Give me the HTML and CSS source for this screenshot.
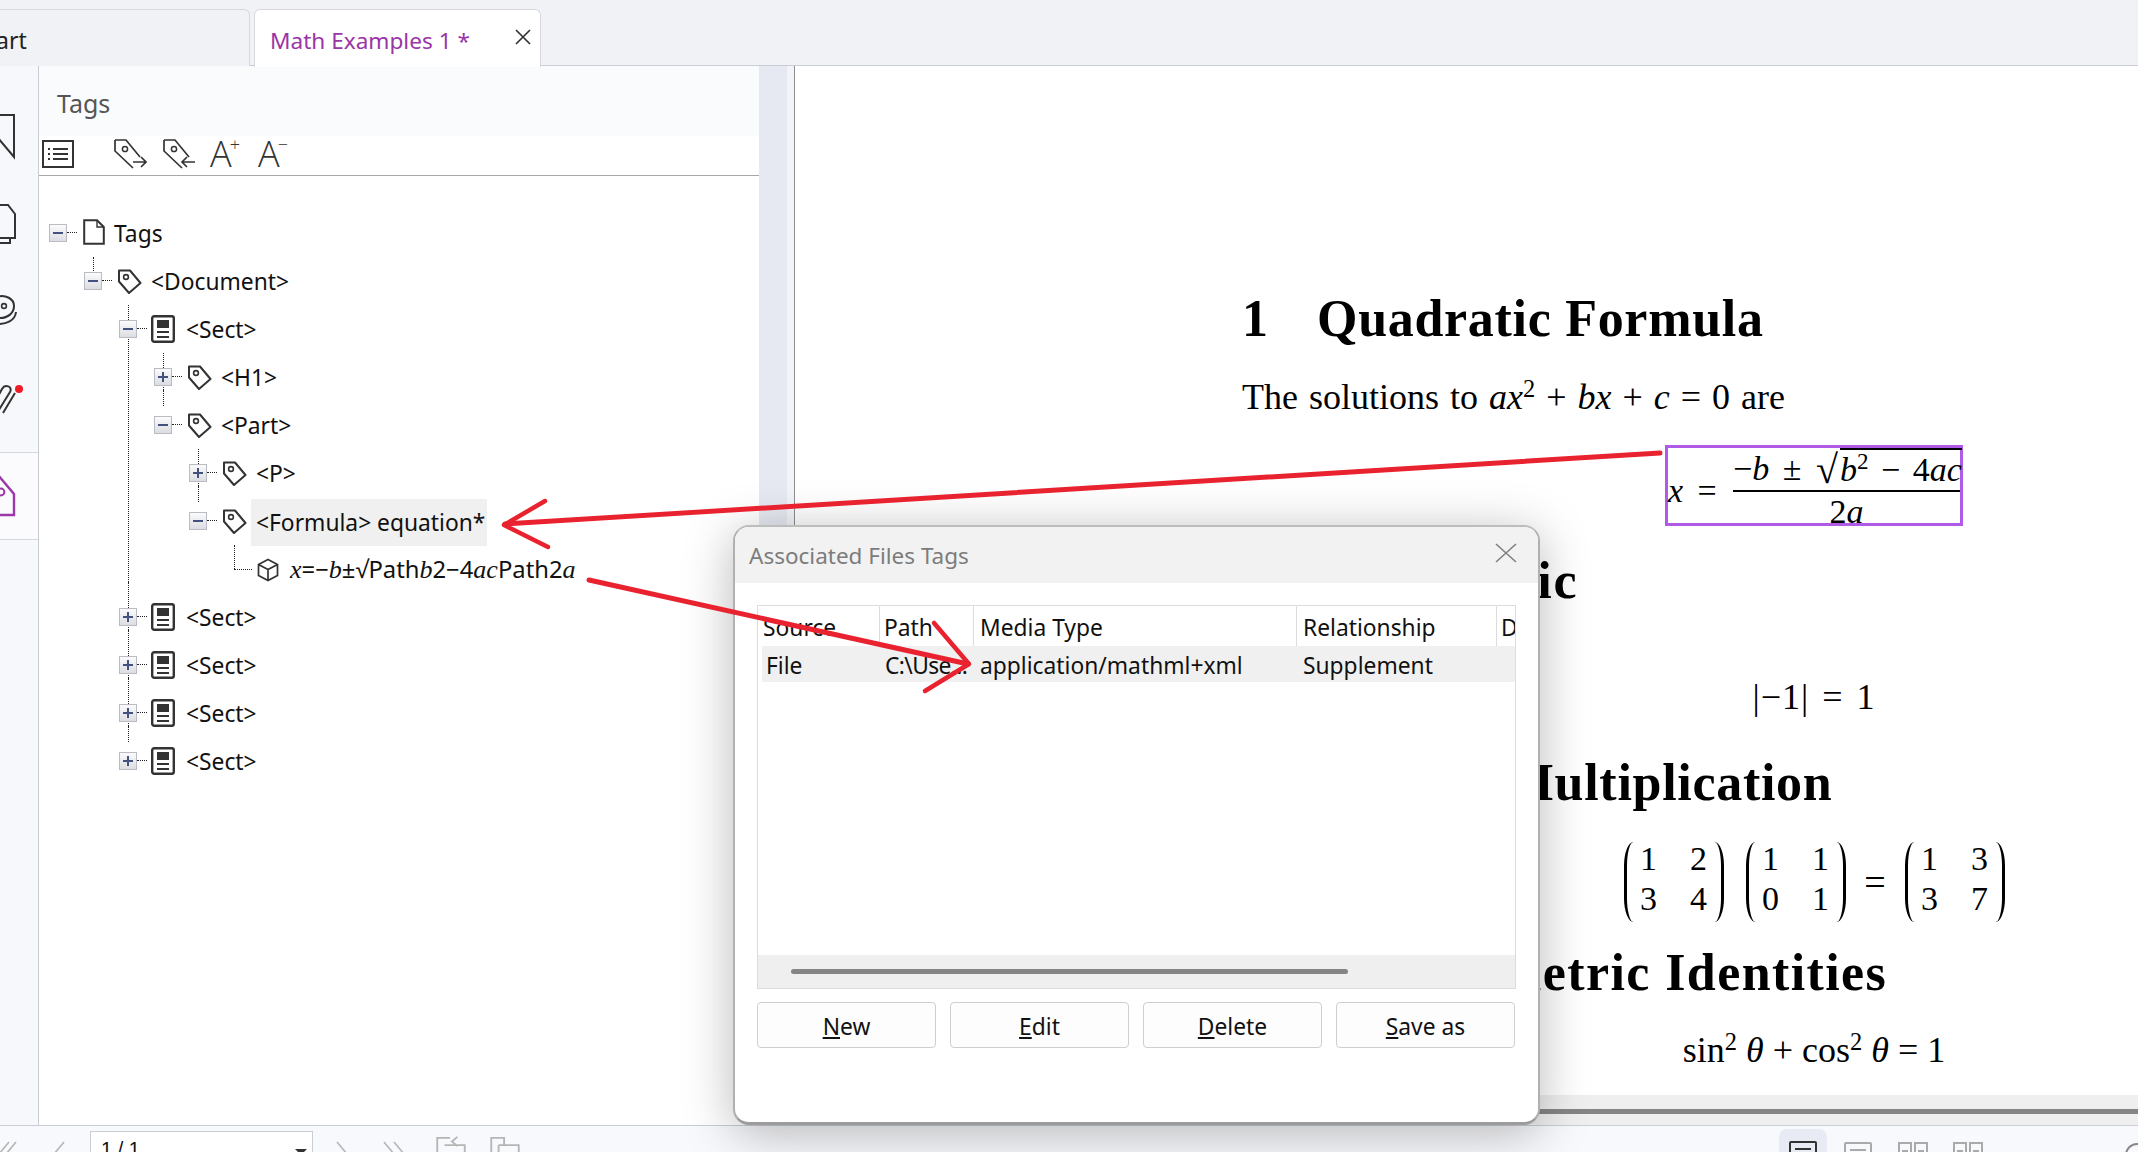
FILE: index.html
```html
<!DOCTYPE html>
<html lang="en">
<head>
<meta charset="utf-8">
<title>Math Examples 1</title>
<link rel="stylesheet" href="styles.css">
</head>
<body>
<svg class="defs" aria-hidden="true">
  <symbol id="tag" viewBox="0 0 25 25"><path d="M2 1.5H13L23.5 14 12 24 2 12.5Z" fill="none" stroke="#333" stroke-width="2" stroke-linejoin="round"/><circle cx="9" cy="8" r="2.4" fill="none" stroke="#333" stroke-width="1.6"/></symbol>
  <symbol id="sect" viewBox="0 0 24 28"><rect x="1.2" y="1.2" width="21.6" height="25.6" rx="2" fill="none" stroke="#333" stroke-width="2.4"/><rect x="6" y="5" width="12" height="8" fill="#333"/><path d="M6 17H18M6 22H18" stroke="#333" stroke-width="2"/></symbol>
  <symbol id="tagout" viewBox="0 0 34 32"><path d="M2 2H13L27 19M20 30 2 13V2" fill="none" stroke="#333" stroke-width="1.7"/><circle cx="12" cy="11" r="2.6" fill="none" stroke="#333" stroke-width="1.5"/><path d="M20 24H33M28 19l5 5-5 5" fill="none" stroke="#333" stroke-width="1.7"/></symbol>
  <symbol id="tagin" viewBox="0 0 34 32"><path d="M2 2H13L27 19M20 30 2 13V2" fill="none" stroke="#333" stroke-width="1.7"/><circle cx="12" cy="11" r="2.6" fill="none" stroke="#333" stroke-width="1.5"/><path d="M33 24H20M25 19l-5 5 5 5" fill="none" stroke="#333" stroke-width="1.7"/></symbol>
  <symbol id="view" viewBox="0 0 28 24"><rect x="1" y="1" width="26" height="24" rx="1" fill="none" stroke="currentColor" stroke-width="2"/><path d="M6 8H22M6 14H22" stroke="currentColor" stroke-width="2"/></symbol>
  <symbol id="view2" viewBox="0 0 30 24"><path d="M1 1H13V25H1ZM17 1H29V25H17Z" fill="none" stroke="currentColor" stroke-width="2"/><path d="M4 9H10M4 15H10M20 9H26M20 15H26" stroke="currentColor" stroke-width="2"/></symbol>
</svg>

<div class="app">
  <header class="tabs">
    <div class="tab">art</div>
    <div class="tab tab-active">
      <span class="tab-title">Math Examples 1 *</span>
      <svg class="tab-x" viewBox="0 0 16 16"><path d="M1 1 15 15M15 1 1 15" stroke="#333" stroke-width="1.7"/></svg>
    </div>
  </header>

  <div class="main">
    <nav class="rail">
      <div class="rail-item"><svg viewBox="0 0 38 48"><path d="M-2 3H14V45L-2 26" fill="none" stroke="#333" stroke-width="2"/></svg></div>
      <div class="rail-item"><svg viewBox="0 0 38 48"><path d="M-2 5H8L15 14V38H-2M10 38V43H-2" fill="none" stroke="#333" stroke-width="2"/></svg></div>
      <div class="rail-item"><svg viewBox="0 0 38 48"><path d="M-4 9C6 6 14 11 14 18S8 30 0 30M-2 36C6 36 15 33 16 24" fill="none" stroke="#333" stroke-width="2"/><circle cx="4" cy="18" r="2.4" fill="none" stroke="#333" stroke-width="1.6"/></svg></div>
      <div class="rail-item"><svg viewBox="0 0 38 48"><path d="M-3 37 10 16C13 10 5 8 2 13L-4 24M3 37 15 17" fill="none" stroke="#333" stroke-width="2"/><circle cx="19" cy="13" r="4" fill="#ee1c25"/></svg></div>
      <div class="rail-item rail-active"><svg viewBox="0 0 38 48"><path d="M-2 3 14 22V43H-2" fill="none" stroke="#9b37a8" stroke-width="2.4"/><circle cx="1" cy="20" r="3.4" fill="none" stroke="#9b37a8" stroke-width="2"/></svg></div>
    </nav>

    <section class="panel">
      <div class="panel-head">Tags</div>
      <div class="panel-tools">
        <svg class="tool tool-list" viewBox="0 0 32 28"><rect x="1" y="1" width="30" height="26" fill="none" stroke="#333" stroke-width="2"/><path d="M11 9H26M11 14H26M11 19H26" stroke="#333" stroke-width="1.8"/><path d="M6 9H8M6 14H8M6 19H8" stroke="#333" stroke-width="1.8"/></svg>
        <svg class="tool tool-tag"><use href="#tagout"/></svg>
        <svg class="tool tool-tag"><use href="#tagin"/></svg>
        <span class="font-tool">A<sup>+</sup></span>
        <span class="font-tool">A<sup>−</sup></span>
      </div>
      <ul class="tree">
        <li>
          <div class="node"><i class="box minus"></i><svg class="ic-doc" viewBox="0 0 22 26"><path d="M1.2 1.2H14L20.8 8V24.8H1.2Z" fill="none" stroke="#333" stroke-width="2"/><path d="M14 1.2V8H20.8" fill="none" stroke="#333" stroke-width="1.4"/></svg><span class="label">Tags</span></div>
          <ul>
            <li>
              <div class="node"><i class="box minus"></i><svg class="ic-tag"><use href="#tag"/></svg><span class="label">&lt;Document&gt;</span></div>
              <ul>
                <li>
                  <div class="node"><i class="box minus"></i><svg class="ic-sect"><use href="#sect"/></svg><span class="label">&lt;Sect&gt;</span></div>
                  <ul>
                    <li><div class="node"><i class="box plus"></i><svg class="ic-tag"><use href="#tag"/></svg><span class="label">&lt;H1&gt;</span></div></li>
                    <li>
                      <div class="node"><i class="box minus"></i><svg class="ic-tag"><use href="#tag"/></svg><span class="label">&lt;Part&gt;</span></div>
                      <ul>
                        <li><div class="node"><i class="box plus"></i><svg class="ic-tag"><use href="#tag"/></svg><span class="label">&lt;P&gt;</span></div></li>
                        <li>
                          <div class="node"><i class="box minus"></i><svg class="ic-tag"><use href="#tag"/></svg><span class="label label-sel">&lt;Formula&gt; equation*</span></div>
                          <ul>
                            <li class="leaf"><div class="node"><i class="box-none"></i><svg class="ic-cube" viewBox="0 0 22 24"><path d="M11 1.5 20.5 6.5V17.5L11 22.5 1.5 17.5V6.5ZM1.5 6.5 11 11.5 20.5 6.5M11 11.5V22.5" fill="none" stroke="#333" stroke-width="1.7"/></svg><span class="label label-math"><em>x</em>=−<em>b</em>±√Path<em>b</em>2−4<em>ac</em>Path2<em>a</em></span></div></li>
                          </ul>
                        </li>
                      </ul>
                    </li>
                  </ul>
                </li>
                <li><div class="node"><i class="box plus"></i><svg class="ic-sect"><use href="#sect"/></svg><span class="label">&lt;Sect&gt;</span></div></li>
                <li><div class="node"><i class="box plus"></i><svg class="ic-sect"><use href="#sect"/></svg><span class="label">&lt;Sect&gt;</span></div></li>
                <li><div class="node"><i class="box plus"></i><svg class="ic-sect"><use href="#sect"/></svg><span class="label">&lt;Sect&gt;</span></div></li>
                <li><div class="node"><i class="box plus"></i><svg class="ic-sect"><use href="#sect"/></svg><span class="label">&lt;Sect&gt;</span></div></li>
              </ul>
            </li>
          </ul>
        </li>
      </ul>
    </section>

    <div class="splitter"></div>

    <main class="doc">
      <div class="page">
        <div class="col">
          <h2 class="h h1st"><span class="num">1</span>Quadratic Formula</h2>
          <p class="para">The solutions to <em>ax</em><sup>2</sup> + <em>bx</em> + <em>c</em> = 0 are</p>
          <div class="display disp-formula">
            <div class="formula">
              <span class="fx"><em>x</em> =</span>
              <div class="frac">
                <div class="frac-num"><span class="lead">−<em>b</em> ± </span><span class="root">√</span><span class="radicand"><em>b</em><sup>2</sup> − 4<em>ac</em></span></div>
                <div class="frac-den">2<em>a</em></div>
              </div>
            </div>
          </div>
          <h2 class="h h2nd"><span class="num">2</span>Arithmetic</h2>
          <div class="display disp-abs"><span>|−1| = 1</span></div>
          <h2 class="h h3rd"><span class="num">3</span>Matrix Multiplication</h2>
          <div class="display disp-mat">
            <div class="matrix"><b>1</b><b>2</b><b>3</b><b>4</b></div>
            <div class="matrix"><b>1</b><b>1</b><b>0</b><b>1</b></div>
            <span class="eq">=</span>
            <div class="matrix"><b>1</b><b>3</b><b>3</b><b>7</b></div>
          </div>
          <h2 class="h h4th"><span class="num">4</span>Trigonometric Identities</h2>
          <div class="display disp-sin"><span>sin<sup>2</sup> <em>θ</em> + cos<sup>2</sup> <em>θ</em> = 1</span></div>
        </div>
      </div>
      <div class="doc-scroll"><div class="doc-thumb"></div></div>
    </main>
  </div>

  <footer class="status">
    <svg class="st-ic st-a" viewBox="0 0 20 20"><path d="M2 22 12 10M9 22 19 10" stroke="#b5b5b5" stroke-width="1.6"/></svg>
    <svg class="st-ic st-b" viewBox="0 0 20 20"><path d="M4 22 14 10" stroke="#b5b5b5" stroke-width="1.6"/></svg>
    <div class="page-box"><span>1 / 1</span><i class="caret"></i></div>
    <svg class="st-ic st-c" viewBox="0 0 20 20"><path d="M4 10 14 22" stroke="#b5b5b5" stroke-width="1.6"/></svg>
    <svg class="st-ic st-d" viewBox="0 0 30 20"><path d="M4 10 14 22M14 10 24 22" stroke="#b5b5b5" stroke-width="1.6"/></svg>
    <svg class="st-ic st-e" viewBox="0 0 34 24"><path d="M2 20V2H16M10 10H32V26M24 1 18 6 24 11" fill="none" stroke="#b5b5b5" stroke-width="2"/></svg>
    <svg class="st-ic st-f" viewBox="0 0 34 24"><path d="M2 20V2H16V10M10 10H32V26M10 10V26" fill="none" stroke="#b5b5b5" stroke-width="2"/></svg>
    <div class="st-views">
      <div class="vw vw-on"><svg><use href="#view"/></svg></div>
      <div class="vw"><svg><use href="#view"/></svg></div>
      <div class="vw vw2"><svg><use href="#view2"/></svg></div>
      <div class="vw vw2"><svg><use href="#view2"/></svg></div>
    </div>
    <i class="st-zoom"></i>
  </footer>

  <div class="dialog">
    <div class="dlg-title">
      <span>Associated Files Tags</span>
      <svg viewBox="0 0 22 20"><path d="M1 1 21 19M21 1 1 19" stroke="#808080" stroke-width="1.6"/></svg>
    </div>
    <div class="dlg-body">
      <div class="list">
        <div class="list-row list-head"><span class="c1">Source</span><span class="c2">Path</span><span class="c3">Media Type</span><span class="c4">Relationship</span><span class="c5">D</span></div>
        <div class="list-row list-sel"><span class="c1">File</span><span class="c2">C:\Use...</span><span class="c3">application/mathml+xml</span><span class="c4">Supplement</span><span class="c5"></span></div>
        <div class="list-fill"></div>
        <div class="list-scroll"><div class="list-thumb"></div></div>
      </div>
      <div class="dlg-btns">
        <button><u>N</u>ew</button>
        <button><u>E</u>dit</button>
        <button><u>D</u>elete</button>
        <button><u>S</u>ave as</button>
      </div>
    </div>
  </div>

  <svg class="arrows" viewBox="0 0 2138 1152" aria-hidden="true">
    <path class="ar-line" d="M1660 453 505 524"/>
    <path class="ar-head" d="M545 501 504 525 548 547"/>
    <path class="ar-line" d="M589 580 968 664"/>
    <path class="ar-head" d="M934 623 969 664 925 691"/>
  </svg>
</div>
</body>
</html>
```
FILE: styles.css
```css
* { box-sizing: border-box; }
html, body { margin: 0; padding: 0; }
body {
  width: 2138px; height: 1152px; overflow: hidden; background: #fff; color: #111;
  font-family: "Noto Sans", "Open Sans", sans-serif; font-size: 22.8px;
}
.defs { display: none; }
.app { position: relative; width: 2138px; height: 1152px; display: flex; flex-direction: column; overflow: hidden; }

/* tabs */
.tabs { height: 66px; flex: none; background: #f1f2f5; border-bottom: 1px solid #c9cdd6; display: flex; padding-top: 9px; gap: 4px; }
.tab { width: 250px; height: 57px; padding-top: 3px; background: #f1f2f5; border: 1px solid #d5d8df; border-left: 0; border-bottom: 0; border-radius: 0 6px 0 0; display: flex; align-items: center; justify-content: flex-start; color: #222; font-size: 23px; text-indent: -4px; overflow: hidden; }
.tab-active { width: 287px; background: #fff; border: 1px solid #d5d8df; border-bottom: 0; border-radius: 6px 6px 0 0; color: #9a35a8; padding: 3px 9px 0 15px; justify-content: space-between; text-indent: 0; position: relative; z-index: 1; height: 58px; font-size: 22.6px; }
.tab-title { white-space: nowrap; }
.tab-x { width: 16px; height: 16px; margin-top: -7px; }

/* main */
.main { flex: 1; min-height: 0; display: flex; }
.rail { width: 39px; flex: none; background: #f7f8fb; border-right: 1px solid #c9cdd6; padding-top: 26px; display: flex; flex-direction: column; overflow: hidden; }
.rail-item { height: 88px; display: flex; align-items: center; flex: none; }
.rail-item svg { width: 38px; height: 48px; overflow: hidden; }
.rail-active { height: 88px; margin-top: 8px; border-top: 1px solid #d5d8df; border-bottom: 1px solid #d5d8df; background: #fbfbfe; }

.panel { width: 720px; flex: none; background: #fff; display: flex; flex-direction: column; }
.panel-head { height: 70px; background: #fafbfd; color: #555; padding: 21px 0 0 18px; font-size: 25px; line-height: 32px; }
.panel-tools { height: 40px; border-bottom: 1px solid #a8a8a8; display: flex; align-items: center; position: relative; padding-left: 3px; }
.tool-list { width: 32px; height: 28px; flex: none; margin-top: -4px; }
.tool-tag { width: 34px; height: 32px; flex: none; margin-left: 15px; margin-top: -4px; }
.tool-list + .tool-tag { margin-left: 39px; }
.font-tool { width: 32px; margin-left: 14px; margin-top: -4px; flex: none; font-size: 36px; font-weight: 300; color: #333; line-height: 32px; font-family: "Open Sans", sans-serif; white-space: nowrap; }
.font-tool + .font-tool { margin-left: 16px; }
.font-tool sup { font-size: 18px; line-height: 0; vertical-align: 16px; margin-left: -2px; }

/* tree */
.tree, .tree ul { list-style: none; margin: 0; padding: 0; }
.tree { padding: 34px 0 0 10px; flex: 1; }
.tree ul { padding-left: 35px; }
.tree ul li { position: relative; }
.tree ul li::before { content: ""; position: absolute; left: 9px; top: -1px; bottom: 0; border-left: 1px dotted #222; }
.tree ul li:last-child::before { bottom: auto; height: 16px; }
.tree ul li + li::before { top: -12px; }
.tree ul li.leaf::before { left: 10px; height: 24px; }
.node { height: 48px; display: flex; align-items: center; position: relative; white-space: nowrap; }
.box { position: relative; z-index: 1; flex: none; width: 18px; height: 18px; margin-top: -2px; border: 1px solid #b9bcc4; background: linear-gradient(#fbfbfc, #dcdde2); margin-right: 16px; }
.box::before { content: ""; position: absolute; left: 3px; top: 7px; width: 10px; height: 2px; background: #43517f; }
.box.plus::after { content: ""; position: absolute; left: 7px; top: 3px; width: 2px; height: 10px; background: #43517f; }
.node::after { content: ""; position: absolute; left: 18px; top: 22px; width: 10px; border-top: 1px dotted #222; }
.leaf .node::after { left: 10px; width: 18px; top: 23px; }
.box-none { flex: none; width: 33px; }
.ic-doc { width: 22px; height: 26px; flex: none; margin-top: -4px; margin-right: 9px; }
.ic-tag { width: 25px; height: 25px; flex: none; margin-left: -1px; margin-top: -2px; margin-right: 9px; }
.ic-sect { width: 24px; height: 28px; flex: none; margin-left: -2px; margin-right: 11px; margin-top: -2px; }
.ic-cube { width: 22px; height: 24px; flex: none; margin-right: 11px; }
.label { line-height: 27px; color: #111; margin-top: -1px; }
.label-sel { background: #f0f0f0; margin-left: -5px; margin-top: 0; padding: 10px 2px 10px 5px; }
.label-math { font-size: 23.8px; }
.label-math em { font-family: "Liberation Serif", serif; font-size: 26px; }

/* splitter */
.splitter { width: 36px; flex: none; background: linear-gradient(90deg, #e6e9f1 0 28px, #f3f4f7 28px 35px, #8b8d92 35px 36px); }

/* document */
.doc { flex: 1; min-width: 0; display: flex; flex-direction: column; overflow: hidden; }
.page { flex: 1; min-height: 0; overflow: hidden; background: #fff; padding-left: 447px; }
.col { width: 1144px; font-family: "Liberation Serif", serif; color: #000; }
.h { height: 60px; margin: 0; display: flex; align-items: center; font-size: 52px; font-weight: 700; letter-spacing: 0.7px; white-space: nowrap; }
.num { width: 75px; flex: none; }
.h1st { margin-top: 222px; }
.h2nd { margin-top: 24px; letter-spacing: 1.9px; }
.h3rd { margin-top: 35px; }
.h3rd .num { width: 89px; }
.h4th { margin-top: 20px; letter-spacing: 1.4px; }
.h4th .num { width: 71px; }
.para { height: 40px; margin: 29px 0 0; line-height: 40px; font-size: 36px; word-spacing: 2px; white-space: nowrap; }
.para sup, .disp-sin sup, .frac sup { font-size: 68%; line-height: 0; vertical-align: 0.5em; }
.display { display: flex; justify-content: center; align-items: center; font-size: 36px; }
.disp-formula { margin-top: 28px; height: 81px; }
.disp-abs { margin-top: 67px; height: 40px; letter-spacing: 1px; word-spacing: 3px; }
.disp-mat { margin-top: 30px; height: 80px; }
.disp-sin { margin-top: 28px; height: 40px; }
.formula { width: 298px; height: 81px; border: 3px solid #b05ae8; display: flex; align-items: flex-start; font-size: 34px; white-space: nowrap; }
.fx { width: 65px; flex: none; margin-top: 24px; line-height: 38px; word-spacing: 6px; }
.frac { width: 227px; flex: none; display: flex; flex-direction: column; align-items: stretch; }
.frac-num { height: 44px; border-bottom: 2px solid #000; display: flex; align-items: flex-start; white-space: pre; }
.lead { width: 83px; flex: none; line-height: 42px; word-spacing: 5px; }
.root { width: 24px; flex: none; font-size: 40px; line-height: 44px; }
.radicand { flex: 1; border-top: 2px solid #000; line-height: 40px; height: 42px; word-spacing: 4px; text-align: right; }
.frac-den { height: 31px; text-align: center; line-height: 40px; }
.matrix { width: 100px; height: 80px; display: grid; grid-template-columns: 50px 50px; grid-auto-rows: 40px; align-items: start; justify-items: center; position: relative; font-size: 34px; }
.matrix + .matrix { margin-left: 22px; }
.matrix b { font-weight: 400; line-height: 40px; margin-top: -3px; }
.matrix::before, .matrix::after { content: ""; position: absolute; top: 0; bottom: 0; width: 16px; border: 0 solid #000; }
.matrix::before { left: 0; border-left-width: 3px; border-radius: 16px / 40px; }
.matrix::after { right: 0; border-right-width: 3px; border-radius: 16px / 40px; }
.eq { width: 59px; text-align: center; font-size: 38px; }
.doc-scroll { height: 30px; flex: none; background: #efefef; padding-top: 14px; }
.doc-thumb { height: 5px; background: #858585; }

/* status */
.status { height: 27px; flex: none; background: #f8f9fc; border-top: 1px solid #c9cdd6; position: relative; display: flex; overflow: hidden; padding-top: 5px; }
.st-ic { flex: none; height: 22px; overflow: visible; }
.st-a { width: 20px; margin-left: -3px; }
.st-b { width: 20px; margin-left: 33px; }
.page-box { width: 223px; height: 30px; margin-left: 20px; flex: none; background: #fff; border: 1px solid #c9cdd6; padding-left: 10px; font-size: 20px; line-height: 34px; position: relative; font-family: "Liberation Sans", sans-serif; }
.caret { position: absolute; right: 5px; top: 17px; border: 6px solid transparent; border-top-color: #333; }
.st-c { width: 20px; margin-left: 20px; }
.st-d { width: 30px; margin-left: 27px; }
.st-e { width: 34px; margin-left: 24px; margin-top: 5px; }
.st-f { width: 34px; margin-left: 20px; margin-top: 5px; }
.st-views { margin-left: auto; margin-right: 150px; display: flex; gap: 15px; margin-top: -1px; }
.vw { width: 40px; height: 40px; display: flex; justify-content: center; padding-top: 11px; color: #aaa; border-radius: 8px 8px 0 0; }
.vw svg { width: 28px; height: 26px; overflow: visible; }
.vw2 svg { width: 30px; }
.vw-on { width: 48px; background: #e8ebf3; color: #333; margin-right: -4px; margin-top: -1px; }
.st-zoom { position: absolute; left: 2125px; top: 17px; width: 24px; height: 24px; border-radius: 50%; border: 2px solid #888; }

/* dialog */
.dialog { position: absolute; left: 733px; top: 525px; width: 807px; height: 600px; background: #fff; border: 2px solid #b0b0b0; border-top-color: #bdbdbd; border-bottom: 3px solid #9c9c9c; border-radius: 16px; box-shadow: 0 8px 50px rgba(0,0,0,.28); overflow: hidden; z-index: 5; display: flex; flex-direction: column; }
.dlg-title { height: 56px; flex: none; background: #f2f2f2; color: #7c7c7c; display: flex; align-items: center; justify-content: space-between; padding: 0 21px 0 14px; font-size: 22.5px; }
.dlg-title svg { width: 22px; height: 20px; margin-top: -4px; }
.dlg-body { flex: 1; padding: 22px 22px 0 22px; display: flex; flex-direction: column; }
.list { height: 384px; flex: none; border: 1px solid #dcdcdc; display: flex; flex-direction: column; overflow: hidden; }
.list-row { display: flex; flex: none; color: #111; white-space: nowrap; }
.list-row span { display: block; padding-left: 4px; overflow: hidden; flex: none; }
.list-row .c3, .list-row .c4 { padding-left: 6px; }
.list-head { height: 40px; line-height: 44px; }
.list-head .c1 { padding-left: 5px; }
.list-head span { border-right: 1px solid #dcdcdc; }
.list-sel { height: 36px; line-height: 40px; background: #f0f0f0; margin-left: 4px; }
.c1 { width: 122px; }
.c2 { width: 94px; }
.c3 { width: 323px; }
.c4 { width: 200px; }
.c5 { width: 20px; border-right: 0 !important; }
.list-sel .c1 { width: 118px; }
.list-sel .c2 { padding-left: 5px; letter-spacing: -0.6px; }
.list-fill { flex: 1; }
.list-scroll { height: 33px; flex: none; background: #efefef; padding: 14px 0 0 33px; }
.list-thumb { width: 557px; height: 5px; border-radius: 3px; background: #858585; }
.dlg-btns { margin-top: 13px; display: flex; gap: 14px; }
.dlg-btns button { width: 179px; height: 46px; background: #fdfdfd; border: 1px solid #cfcfcf; border-radius: 4px; color: #111; font: inherit; padding: 2px 0 0; }

/* annotation arrows */
.arrows { position: absolute; left: 0; top: 0; width: 2138px; height: 1152px; z-index: 6; pointer-events: none; }
.ar-line { fill: none; stroke: #e8232f; stroke-width: 5; stroke-linecap: round; }
.ar-head { fill: none; stroke: #e8232f; stroke-width: 4.5; stroke-linecap: round; stroke-linejoin: round; }
```
